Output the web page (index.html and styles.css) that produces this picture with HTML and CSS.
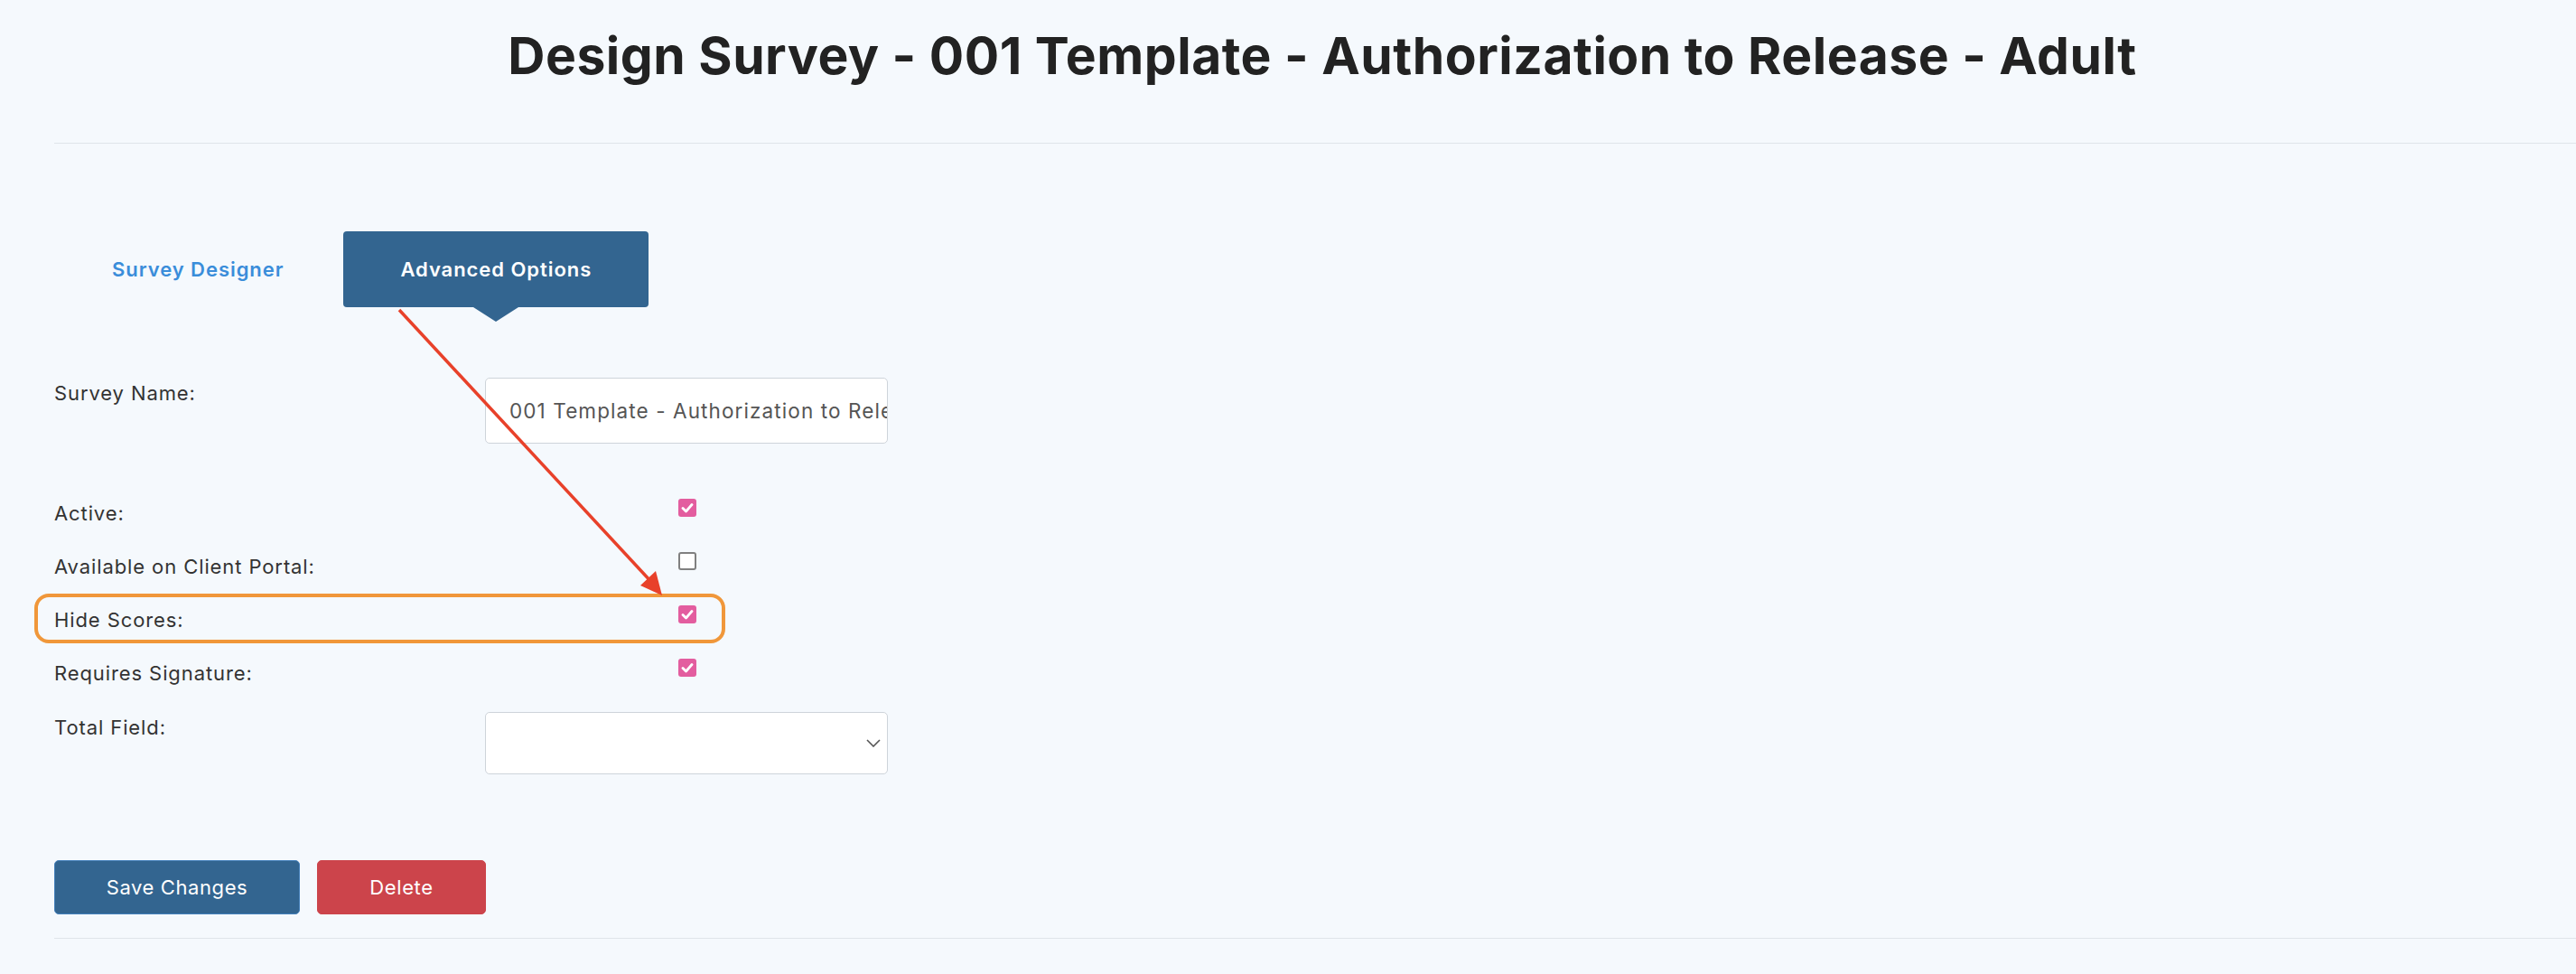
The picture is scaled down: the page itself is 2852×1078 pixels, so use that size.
FILE: index.html
```html
<!DOCTYPE html>
<html lang="en">
<head>
<meta charset="utf-8">
<title>Design Survey</title>
<link rel="stylesheet" href="styles.css">
</head>
<body>
<div class="page">
  <h1 class="title">Design Survey - 001 Template - Authorization to Release - Adult</h1>
  <div class="rule"></div>

  <nav class="tabs">
    <a class="tab">Survey Designer</a>
    <a class="tab active">Advanced Options</a>
  </nav>

  <div class="form">
    <div class="row row-input">
      <div class="label">Survey Name:</div>
      <div class="field"><div class="input"><span class="input-text">001 Template - Authorization to Release - Adult</span></div></div>
    </div>
    <div class="row">
      <div class="label">Active:</div>
      <div class="field"><span class="cb on"><svg viewBox="0 0 20 20"><path d="M5 10.5 L8.5 14 L15 6.5" /></svg></span></div>
    </div>
    <div class="row">
      <div class="label">Available on Client Portal:</div>
      <div class="field"><span class="cb"></span></div>
    </div>
    <div class="row highlight">
      <div class="label">Hide Scores:</div>
      <div class="field"><span class="cb on"><svg viewBox="0 0 20 20"><path d="M5 10.5 L8.5 14 L15 6.5" /></svg></span></div>
    </div>
    <div class="row">
      <div class="label">Requires Signature:</div>
      <div class="field"><span class="cb on"><svg viewBox="0 0 20 20"><path d="M5 10.5 L8.5 14 L15 6.5" /></svg></span></div>
    </div>
    <div class="row row-input">
      <div class="label">Total Field:</div>
      <div class="field"><div class="select"><svg class="chev" viewBox="0 0 16 9"><path d="M1 1 L8 8 L15 1" /></svg></div></div>
    </div>
  </div>

  <div class="actions">
    <button class="btn btn-save">Save Changes</button>
    <button class="btn btn-delete">Delete</button>
  </div>
  <div class="rule rule-bottom"></div>
</div>

<svg class="annot-arrow" width="2852" height="1078" viewBox="0 0 2852 1078">
  <line x1="442" y1="343" x2="722" y2="645" />
  <polygon points="733,659 709,648 726,632" />
</svg>
</body>
</html>
```

FILE: styles.css
```css
*, *::before, *::after { box-sizing: border-box; }

html, body {
  margin: 0;
  padding: 0;
  background: #f5f9fd;
  font-family: "Inter", "Liberation Sans", sans-serif;
  color: #333;
  overflow: hidden;
}

.page {
  padding-left: 60px;
  width: 2852px;
  height: 1078px;
}

.title {
  margin: 28px 0 0 0;
  padding-left: 16px;
  text-align: center;
  font-size: 57px;
  line-height: 68px;
  font-weight: 700;
  color: #222;
  letter-spacing: 0.5px;
}

.rule {
  height: 1px;
  background: #dfe5ea;
  margin-top: 62px;
}

.tabs {
  display: flex;
  gap: 2px;
  margin-top: 97px;
}

.tab {
  position: relative;
  height: 84px;
  display: flex;
  align-items: center;
  padding: 0 64px;
  font-size: 22px;
  font-weight: 600;
  letter-spacing: 0.95px;
  color: #3a8dda;
  border-radius: 4px;
}

.tab.active {
  background: #336590;
  color: #fff;
  padding: 0 63px;
}

.tab.active::after {
  content: "";
  position: absolute;
  left: 50%;
  top: 100%;
  margin-left: -25px;
  border-left: 25px solid transparent;
  border-right: 25px solid transparent;
  border-top: 16px solid #336590;
}

.form {
  margin-top: 78px;
  width: 923px;
}

.row {
  position: relative;
  display: flex;
  align-items: flex-start;
  margin-bottom: 27px;
}

.row-input:first-child {
  margin-bottom: 61px;
}

.label {
  width: 477px;
  flex: none;
  font-size: 22px;
  line-height: 32px;
  letter-spacing: 0.9px;
  color: #333;
}

.row-input .label {
  padding-top: 1px;
}

.field {
  width: 446px;
  display: flex;
  justify-content: center;
}

.input {
  width: 446px;
  height: 73px;
  background: #fff;
  border: 1px solid #ced4da;
  border-radius: 5px;
  padding: 0 24px 0 26px;
  display: flex;
  align-items: center;
  overflow: hidden;
  white-space: nowrap;
}

.input-text {
  font-size: 22.5px;
  letter-spacing: 1.1px;
  color: #555;
}

.select {
  position: relative;
  width: 446px;
  height: 69px;
  background: #fff;
  border: 1px solid #ced4da;
  border-radius: 5px;
}

.chev {
  position: absolute;
  right: 7px;
  top: 29px;
  width: 16px;
  height: 9px;
  fill: none;
  stroke: #555;
  stroke-width: 1.6;
}

.cb {
  width: 20px;
  height: 20px;
  border-radius: 3px;
  border: 2px solid #808080;
  background: #fff;
  display: block;
  margin-left: 2px;
}

.cb.on {
  background: #e35d9f;
  border-color: #e35d9f;
  border-width: 0;
}

.cb svg {
  width: 20px;
  height: 20px;
  display: block;
  fill: none;
  stroke: #fff;
  stroke-width: 2.8;
  stroke-linecap: round;
  stroke-linejoin: round;
}

.highlight::before {
  content: "";
  position: absolute;
  left: -22px;
  top: -13px;
  width: 765px;
  height: 55px;
  border: 4px solid #f0973a;
  border-radius: 16px;
  pointer-events: none;
}

.actions {
  display: flex;
  gap: 19px;
  margin-top: 95px;
}

.btn {
  height: 60px;
  border-radius: 5px;
  font-family: inherit;
  font-size: 22px;
  letter-spacing: 0.6px;
  color: #fff;
  border: 1px solid transparent;
  padding: 0;
}

.btn-save {
  width: 272px;
  background: #336590;
  border-color: #4480bb;
}

.btn-delete {
  width: 187px;
  background: #cc444b;
  border-color: #cc444b;
}

.rule-bottom {
  margin-top: 26px;
}

.annot-arrow {
  position: absolute;
  left: 0;
  top: 0;
  pointer-events: none;
}

.annot-arrow line {
  stroke: #e8412a;
  stroke-width: 3.5;
}

.annot-arrow polygon {
  fill: #e8412a;
}
```
